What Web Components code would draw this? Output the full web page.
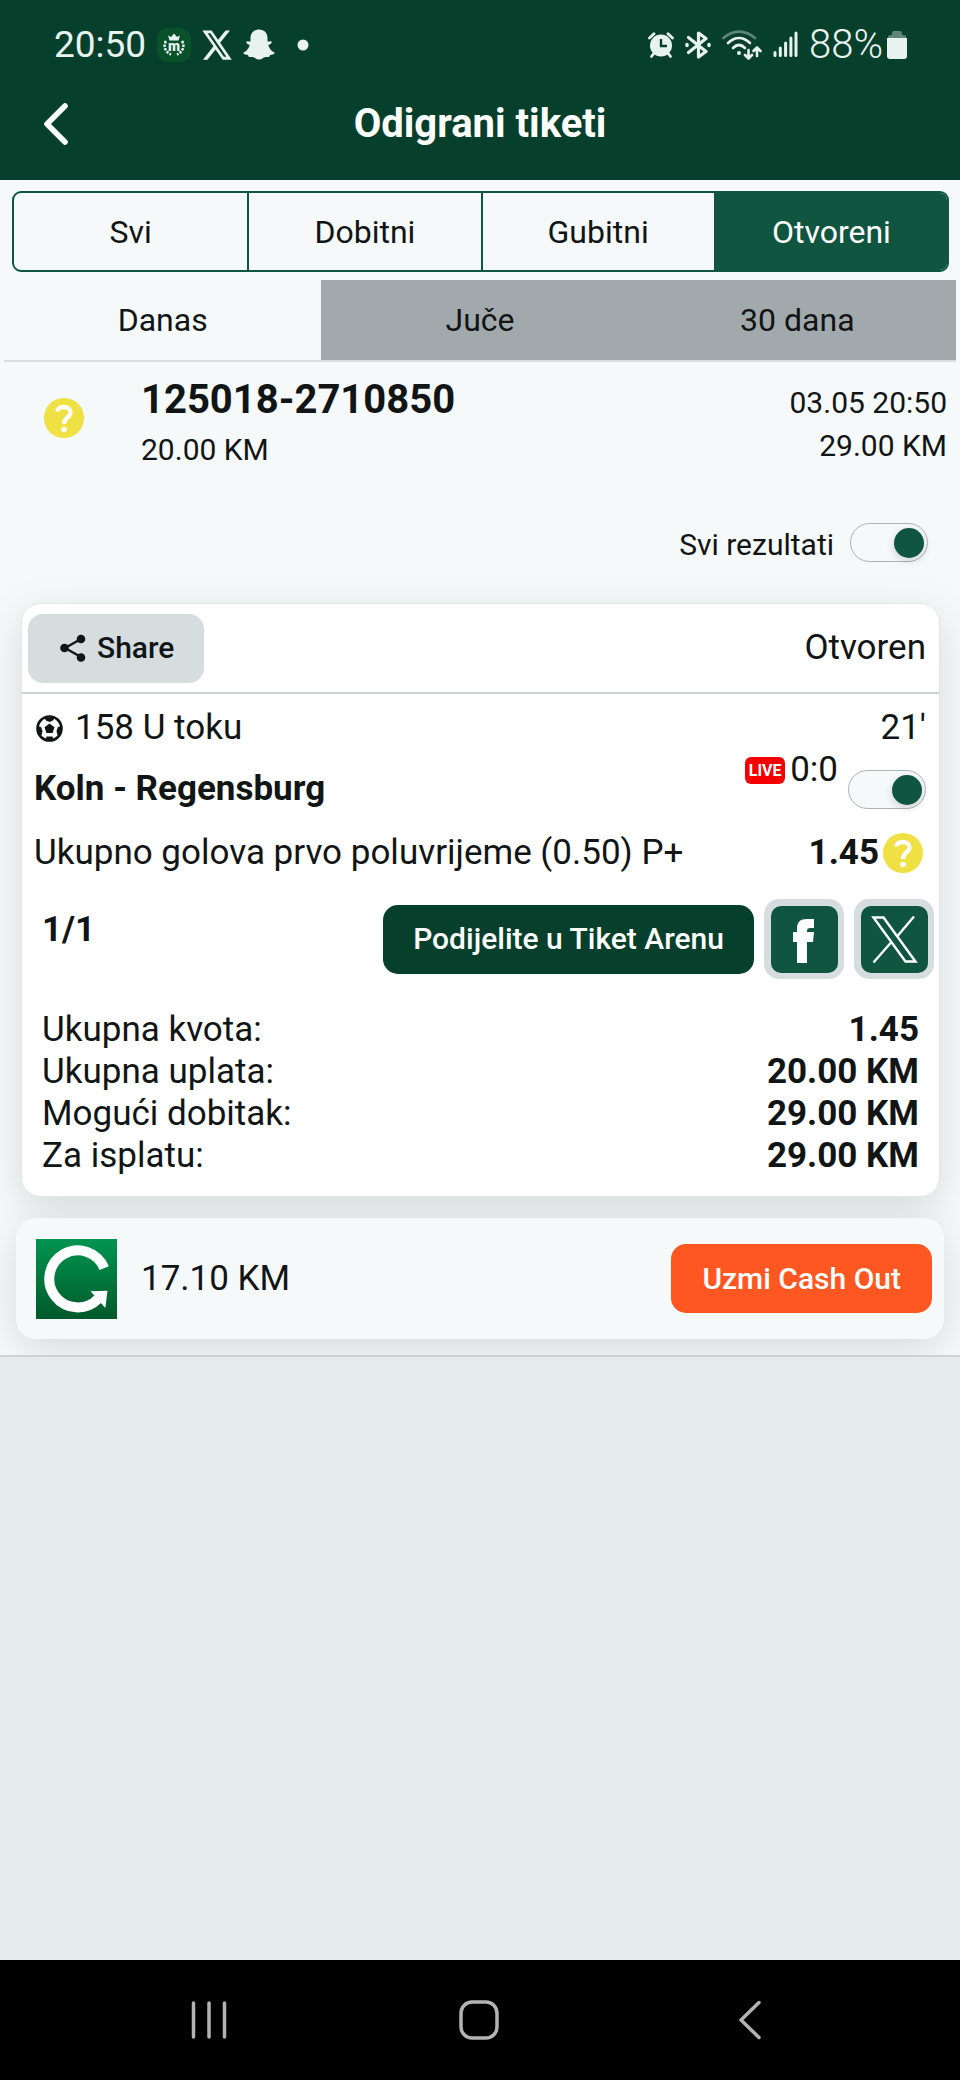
<!DOCTYPE html>
<html lang="bs">
<head>
<meta charset="utf-8">
<meta name="viewport" content="width=device-width, initial-scale=1">
<title>Odigrani tiketi</title>
<style>
  :root {
    --dark: #063f2b;
    --green: #10553f;
    --surface: #f5f9fa;
    --muted: #d5dddf;
    --page: #e5ebed;
    --text: #121516;
    --shadow: 0 11px 43px rgba(0, 0, 0, .12);
  }
  body {
    margin: 0;
    background: var(--page);
    color: var(--text);
    font-family: Roboto, "Noto Sans", sans-serif;
    font-size: 35px;
    line-height: 40px;
  }
</style>
</head>
<body>
<ticket-app></ticket-app>

<script>
const define = (name, html) => {
  const template = document.createElement('template');
  template.innerHTML = html;
  customElements.define(name, class extends HTMLElement {
    constructor() {
      super();
      this.attachShadow({ mode: 'open' }).append(template.content.cloneNode(true));
    }
  });
};

define('status-bar', `
<style>
  :host { display: flex; align-items: center; justify-content: space-between; height: 88px; padding: 1px 53px 0 54px; color: #e8f2ee; font-size: 37px; box-sizing: border-box; }
  div { display: flex; align-items: center; }
  svg { display: block; flex: none; }
  .left svg { margin-left: 11px; }
  .left svg.dot { margin-left: 22px; }
  .right { gap: 11px; }
  .pct { display: flex; align-items: center; gap: 4px; font-size: 40px; }
  .thin { font-weight: 300; }
</style>
<div class="left">
  <span>20:50</span>
  <svg width="34" height="34" viewBox="0 0 34 34" aria-hidden="true">
    <rect width="34" height="34" rx="10" fill="#08512a"/>
    <path d="M12.500 12.500 11 7.500l3 1.500 3-3.500 3 3.500 3-1.500-1.500 5z" fill="#e8f2ee"/>
    <path d="M9 13c-3 5-1 11 5 13.500M25 13c3 5 1 11-5 13.500" fill="none" stroke="#e8f2ee" stroke-width="2.500" stroke-dasharray="2.500 1.200"/>
    <text x="17" y="23" text-anchor="middle" font-family="Roboto, sans-serif" font-size="14" font-weight="900" fill="#e8f2ee">m</text>
  </svg>
  <svg width="30" height="30" viewBox="1 2 22 20" preserveAspectRatio="none" fill="currentColor" aria-hidden="true"><path d="M18.244 2.250h3.308l-7.227 8.260 8.502 11.240H16.170l-5.214-6.817L4.990 21.750H1.680l7.730-8.835L1.254 2.250H8.080l4.713 6.231zm-1.161 17.520h1.833L7.084 4.126H5.117z"/></svg>
  <svg width="32" height="31" viewBox="0 0 32 31" fill="currentColor" aria-hidden="true"><path d="M16 .5c-5.500 0-8.500 4-8.500 8.500v3.500c-1 .5-2.800-.8-4 .3-.8 1 .5 2 3.300 3.200C5.500 20 3 22.500.5 23.500c-.5 1.500 1.500 2 4.500 2.500.5.800.3 2 1.200 2 2 0 3.800-.5 5.800 1 2.500 2 5.500 2 8 0 2-1.500 3.800-1 5.800-1 .9 0 .7-1.200 1.200-2 3-.5 5-1 4.500-2.500-2.500-1-5-3.500-6.300-7.500 2.800-1.200 4.100-2.200 3.300-3.200-1.200-1.100-3 .2-4-.3V9c0-4.500-3-8.500-8.500-8.500z"/></svg>
  <svg class="dot" width="12" height="12" viewBox="0 0 12 12" fill="currentColor" aria-hidden="true"><circle cx="6" cy="6" r="5.500"/></svg>
</div>
<div class="right">
  <svg width="26" height="26" viewBox="0 0 26 26" aria-hidden="true"><circle cx="13" cy="13.500" r="11" fill="currentColor"/><path d="M1.500 6 6 1.800M24.500 6 20 1.800M3.500 24.500l3-4M22.500 24.500l-3-4" stroke="currentColor" stroke-width="2.800" stroke-linecap="round"/><path d="M13 7v7h6" fill="none" stroke="#063f2b" stroke-width="2.400"/></svg>
  <svg width="26" height="28" viewBox="0 0 26 28" fill="none" stroke="currentColor" stroke-width="3.200" stroke-linejoin="round" stroke-linecap="round" aria-hidden="true"><path d="M3.500 6.500 21 20.500 13.500 26V2L21 7.500 3.500 21.500"/><path d="M2 13.500v1M24 13.500v1" stroke-width="3.500"/></svg>
  <svg width="40" height="30" viewBox="0 0 40 30" fill="none" stroke="currentColor" stroke-width="2.600" stroke-linecap="round" stroke-linejoin="round" aria-hidden="true"><path d="M1.500 8C11-.5 23-.5 33 8" opacity=".4"/><path d="M6 13C13 6.500 21 6.500 28 13M11 18c4-4 8-4 12 0"/><circle cx="17" cy="23" r="2" fill="currentColor" stroke="none"/><path d="M26.500 20v8m-3.500-3 3.500 3.500 3.500-3.500M35 26v-8m-3.500 3 3.500-3.500 3.500 3.500"/></svg>
  <svg width="25" height="27" viewBox="0 0 25 27" stroke="currentColor" stroke-width="3" stroke-linecap="round" aria-hidden="true"><path d="M2 21.500v3M7.300 17v7.500M12.600 12v12.500M17.900 7v17.500M23 2v22.500"/></svg>
  <span class="pct"><span class="thin">88%</span>
  <svg width="20" height="28" viewBox="0 0 20 28" aria-hidden="true"><path d="M1 8V6q0-2 3-2h1V2q0-2 2-2h6q2 0 2 2v2h1q3 0 3 2v2z" fill="currentColor" opacity=".4"/><path d="M0 7h20v18q0 3-3 3H3q-3 0-3-3z" fill="currentColor"/></svg></span>
</div>`);

define('title-bar', `
<style>
  :host { display: grid; grid-template-columns: 112px 1fr 112px; align-items: center; height: 72px; padding-bottom: 20px; color: #fff; }
  h1 { margin: 0; grid-column: 2; font-size: 40px; font-weight: 700; text-align: center; }
  button { grid-row: 1; width: 112px; height: 72px; padding: 0; border: 0; background: none; color: inherit; display: grid; place-items: center; }
  svg { display: block; }
</style>
<button type="button" aria-label="Nazad"><svg width="26" height="42" viewBox="0 0 26 42" fill="none" stroke="currentColor" stroke-width="5.600" stroke-linecap="round" stroke-linejoin="round"><path d="M22 3 4 21l18 18"/></svg></button>
<h1><slot></slot></h1>`);

define('segment-bar', `
<style>
  :host { display: grid; grid-auto-flow: column; grid-auto-columns: 1fr; height: 81px; box-sizing: border-box; margin: 11px 11px 8px 12px; border: 2px solid var(--green); border-radius: 9px; overflow: hidden; }
  ::slotted(button) { border: 0; border-left: 2px solid var(--green); background: none; color: inherit; font: inherit; font-size: 32px; padding: 0; }
  ::slotted(button:first-child) { border-left: 0; }
  ::slotted(button[aria-pressed=true]) { background: var(--green); color: #fff; }
</style>
<slot></slot>`);

define('day-tabs', `
<style>
  :host { display: grid; grid-auto-flow: column; grid-auto-columns: 1fr; height: 80px; margin: 0 4px; border-bottom: 2px solid #d8ddde; }
  ::slotted(button) { border: 0; background: #a2a9ac; color: inherit; font: inherit; font-size: 32px; padding: 0; }
  ::slotted(button[aria-selected=true]) { background: none; }
</style>
<slot></slot>`);

define('help-mark', `
<style>:host { display: block; width: 40px; height: 40px; flex: none; } svg { display: block; }</style>
<svg width="40" height="40" viewBox="0 0 40 40" role="img" aria-label="Otvoren"><circle cx="20" cy="20" r="20" fill="#efe043"/><path d="M13.500 13.500C13.500 10.500 16 9 19.500 9c4 0 7 2 7 5.500 0 5-6.500 4.500-6.500 11.500" fill="none" stroke="#fff" stroke-width="4.400"/><circle cx="20" cy="31.500" r="2.800" fill="#fff"/></svg>`);

define('toggle-switch', `
<style>
  :host { display: flex; align-items: flex-end; font-size: 30px; line-height: 35px; }
  label { margin-right: var(--label-gap, 0); }
  input { appearance: none; display: flex; align-items: center; justify-content: flex-end; width: 78px; height: 39px; margin: 0; padding: 0 3px; box-sizing: border-box; border: 1px solid #aeb3b4; border-radius: 20px; background: var(--surface); flex: none; }
  input::before { content: ""; width: 30px; height: 30px; border-radius: 50%; background: var(--green); box-shadow: 0 3px 8px rgba(0, 0, 0, .16); }
  input:not(:checked) { justify-content: flex-start; }
  slot { display: block; }
</style>
<label for="t"><slot></slot></label><input id="t" type="checkbox" role="switch" aria-label="Prikaz rezultata" checked>`);

define('ticket-head', `
<style>
  :host { display: grid; grid-template-columns: 97px 1fr auto; align-items: start; padding: 15px 13px 0 44px; font-size: 30px; }
  help-mark { margin-top: 21px; }
  h2 { margin: 0 0 9px; font-size: 40px; line-height: 46px; font-weight: 700; }
  p { margin: 0; line-height: 35px; }
  .right { text-align: right; padding-top: 4px; }
  .right p { line-height: 43px; }
</style>
<help-mark></help-mark>
<div><h2>125018-2710850</h2><p>20.00 KM</p></div>
<div class="right"><p>03.05 20:50</p><p>29.00 KM</p></div>`);

define('match-row', `
<style>
  :host { display: block; padding: 14px 13px 0 12px; }
  div { display: flex; }
  .top, .pick { align-items: center; justify-content: space-between; }
  .kind { align-items: center; gap: 12px; }
  .kind svg { margin-left: 2px; }
  .teams { height: 61px; align-items: flex-end; justify-content: space-between; }
  .teams strong, .pick strong { font-weight: 700; }
  .result { align-items: flex-end; gap: 10px; }
  .score { height: 61px; line-height: 44px; gap: 5px; }
  .live { margin-top: 9px; width: 40px; height: 27px; border-radius: 6px; background: #f50000; color: #fff; font-size: 16px; line-height: 27px; font-weight: 700; text-align: center; }
  .pick { margin-top: 24px; }
  .odd { align-items: center; gap: 4px; padding-right: 3px; }
</style>
<div class="top">
  <div class="kind"><svg width="27" height="27" viewBox="0 0 27 27" aria-hidden="true"><circle cx="13.500" cy="13.500" r="12" fill="none" stroke="currentColor" stroke-width="2.600"/><path d="m13.500 8.500 5 3.700-1.900 5.800h-6.200l-1.900-5.800zM8 2.500h11l-2 3-3.500 1.500L10 5.500zM1.500 11l3.500 1 1.500 4-1 4.500-3-1zM25.500 11 22 12l-1.500 4 1 4.500 3-1zM9.500 25.500l1-4h6l1 4z" fill="currentColor"/></svg><span>158 U toku</span></div>
  <span>21'</span>
</div>
<div class="teams">
  <strong>Koln - Regensburg</strong>
  <div class="result"><div class="score"><span class="live">LIVE</span><span>0:0</span></div><toggle-switch></toggle-switch></div>
</div>
<div class="pick"><span>Ukupno golova prvo poluvrijeme (0.50) P+</span><div class="odd"><strong>1.45</strong><help-mark></help-mark></div></div>`);

customElements.define('icon-button', class extends HTMLElement {
  static icons = {
    facebook: '<svg width="67" height="67" viewBox="0 0 67 67"><path d="M26 57V36h-4V26h4v-3c0-7 3-10 10-10h7v9h-4c-2 0-3 1-3 3v1h7l-1 10h-6v21z" fill="#fff"/></svg>',
    x: '<svg width="67" height="67" viewBox="0 0 67 67"><path d="M12.500 11.500h10L54.500 55.500h-10zM53 10.500 36.500 30M12.500 56.500 30 36.500" fill="none" stroke="#fff" stroke-width="2.400"/></svg>'
  };
  constructor() {
    super();
    const kind = this.getAttribute('kind');
    this.attachShadow({ mode: 'open' }).innerHTML = `
      <style>
        :host { display: block; }
        button { display: grid; place-items: center; width: 80px; height: 80px; padding: 0; border: 0; border-radius: 15px; background: var(--muted); }
        svg { display: block; border-radius: 10px; background: var(--green); }
      </style>
      <button type="button" aria-label="${kind}">${this.constructor.icons[kind]}</button>`;
  }
});

customElements.define('action-button', class extends HTMLElement {
  constructor() {
    super();
    this.attachShadow({ mode: 'open' }).innerHTML = `
      <style>
        :host { display: block; }
        button { display: flex; align-items: center; justify-content: center; gap: 11px; height: 69px; padding: 0 30px; border: 0; border-radius: 15px; background: var(--dark); color: #fff; font: inherit; font-size: 30px; font-weight: 500; white-space: nowrap; }
        :host([tone=muted]) button { background: var(--muted); color: var(--text); padding: 0 30px 0 32px; }
        :host([tone=orange]) button { background: #ff5722; padding: 0 31px; }
      </style>
      <button type="button"><slot></slot></button>`;
  }
});

define('ticket-card', `
<style>
  :host { display: block; margin: 41px 20px 0 21px; border-radius: 19px; background: #fff; border: 1px solid #e3e7e8; box-shadow: var(--shadow); }
  header { display: flex; align-items: center; justify-content: space-between; height: 88px; padding: 0 13px 0 6px; border-bottom: 2px solid #cfd2d3; }
  svg { display: block; }
  .share { display: flex; align-items: flex-start; justify-content: flex-end; gap: 10px; margin-top: 26px; padding: 0 5px 0 20px; }
  .share strong { margin: 11px auto 0 0; font-weight: 700; }
  .main { align-self: center; }
  dl { margin: 30px 20px 19px; display: grid; grid-template-columns: 1fr auto; line-height: 42px; }
  dd { margin: 0; text-align: right; font-weight: 700; }
</style>
<header>
  <action-button tone="muted"><svg width="26" height="28" viewBox="0 0 26 28" aria-hidden="true"><path d="M21 5 5 14l16 9" fill="none" stroke="currentColor" stroke-width="2.400"/><g fill="currentColor"><circle cx="21" cy="5" r="4.300"/><circle cx="4.500" cy="14" r="4.300"/><circle cx="21" cy="23.500" r="4.300"/></g></svg>Share</action-button>
  <span>Otvoren</span>
</header>
<match-row></match-row>
<div class="share">
  <strong>1/1</strong>
  <action-button class="main">Podijelite u Tiket Arenu</action-button>
  <icon-button kind="facebook"></icon-button>
  <icon-button kind="x"></icon-button>
</div>
<dl>
  <dt>Ukupna kvota:</dt><dd>1.45</dd>
  <dt>Ukupna uplata:</dt><dd>20.00 KM</dd>
  <dt>Mogući dobitak:</dt><dd>29.00 KM</dd>
  <dt>Za isplatu:</dt><dd>29.00 KM</dd>
</dl>`);

define('cash-out', `
<style>
  :host { display: flex; align-items: center; position: relative; height: 121px; box-sizing: border-box; margin: 21px 16px 16px; padding: 0 12px 0 20px; border-radius: 20px; background: var(--surface); box-shadow: var(--shadow); }
  svg { display: block; }
  span { margin: 0 auto 0 24px; }
</style>
<svg width="81" height="80" viewBox="0 0 81 80" aria-hidden="true">
  <defs><linearGradient id="g" x1="0" y1="0" x2="0" y2="1"><stop offset="0" stop-color="#009550"/><stop offset="1" stop-color="#00592b"/></linearGradient></defs>
  <rect width="81" height="80" fill="url(#g)"/>
  <path d="M68.200 29.100A28.500 28.500 0 1 0 62 60" fill="none" stroke="#fff" stroke-width="10"/>
  <path d="M54.500 52.300 71.500 51.700 69.300 69z" fill="#fff"/>
</svg>
<span>17.10 KM</span>
<action-button tone="orange">Uzmi Cash Out</action-button>`);

define('nav-bar', `
<style>
  :host { display: grid; grid-template-columns: 1fr 1fr 1fr; height: 120px; padding: 0 75px 0 74px; background: #000; }
  button { display: grid; place-items: center; padding: 0; border: 0; background: none; color: #b3b3b3; }
  svg { display: block; }
</style>
<button type="button" aria-label="Nedavno"><svg width="38" height="40" viewBox="0 0 38 40" stroke="currentColor" stroke-width="3.500" stroke-linecap="round"><path d="M3.500 3v34M19 3v34M34.500 3v34"/></svg></button>
<button type="button" aria-label="Početna"><svg width="40" height="40" viewBox="0 0 40 40" fill="none" stroke="currentColor" stroke-width="3.500"><rect x="2" y="2" width="36" height="36" rx="11"/></svg></button>
<button type="button" aria-label="Nazad"><svg width="24" height="40" viewBox="0 0 24 40" fill="none" stroke="currentColor" stroke-width="3.500" stroke-linecap="round" stroke-linejoin="round"><path d="M21 2.500 3 20l18 17.500"/></svg></button>`);

define('ticket-app', `
<style>
  :host { display: flex; flex-direction: column; min-height: 100vh; }
  header { background: var(--dark); }
  main { flex: 1; }
  section { display: flow-root; overflow: hidden; background: var(--surface); border-bottom: 2px solid #cdd2d4; }
  .all { --label-gap: 16px; margin: 56px 32px 0; justify-content: flex-end; }
</style>
<header>
  <status-bar></status-bar>
  <title-bar>Odigrani tiketi</title-bar>
</header>
<main>
  <section>
    <segment-bar>
      <button type="button">Svi</button><button type="button">Dobitni</button><button type="button">Gubitni</button><button type="button" aria-pressed="true">Otvoreni</button>
    </segment-bar>
    <day-tabs role="tablist">
      <button type="button" role="tab" aria-selected="true">Danas</button><button type="button" role="tab">Juče</button><button type="button" role="tab">30 dana</button>
    </day-tabs>
    <ticket-head></ticket-head>
    <toggle-switch class="all">Svi rezultati</toggle-switch>
    <ticket-card></ticket-card>
    <cash-out></cash-out>
  </section>
</main>
<nav-bar></nav-bar>`);
</script>
</body>
</html>
